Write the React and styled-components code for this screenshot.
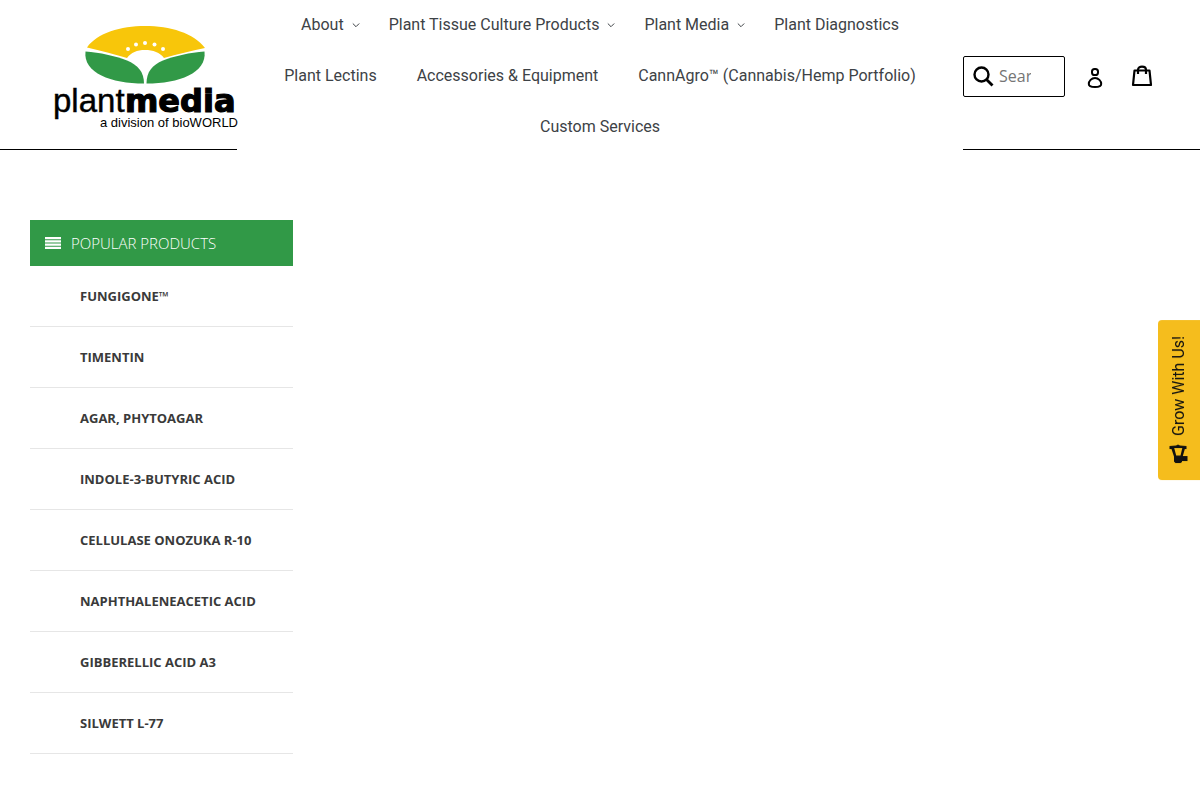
import React from 'react'
import styled, { createGlobalStyle } from 'styled-components'

const GlobalStyle = createGlobalStyle`
    * {
        box-sizing: border-box;
    }
    body {
        margin: 0;
        background-color: #fff;
        color: #3d4246;
        font-family: 'Open Sans', 'Noto Sans', sans-serif;
    }
    a {
        color: inherit;
        text-decoration: none;
    }
`

const Header = styled.header`
    display: grid;
    grid-template-columns: minmax(0, 237fr) minmax(0, 726fr) minmax(0, 237fr);
`

const Side = styled.div`
    display: flex;
    justify-content: flex-end;
    align-items: center;
    padding-top: 3px;
    border-bottom: 1px solid #000;
`

const LogoLink = styled.a`
    display: block;
    > svg {
        display: block;
        overflow: visible;
    }
`

const Nav = styled.nav`
    > ul {
        display: flex;
        flex-wrap: wrap;
        justify-content: center;
        row-gap: 5px;
        margin: 0;
        padding: 2px 0 0;
        list-style: none;
    }
`

const navItem = `
    display: flex;
    align-items: center;
    height: 46px;
    font-family: Roboto, sans-serif;
    font-size: 16px;
    line-height: 24px;
    color: #3d4246;
    white-space: nowrap;
`

const NavLink = styled.a`
    ${navItem}
    padding: 0 20px;
`

const NavButton = styled.button`
    ${navItem}
    gap: 8px;
    padding: 0 9px 0 20px;
    border: 0;
    background: none;
    cursor: pointer;
`

const Tools = styled.div`
    display: flex;
    align-items: center;
    gap: 13px;
    width: 100%;
    padding-right: 41px;
`

const SearchForm = styled.form`
    display: flex;
    align-items: center;
    flex: 1;
    min-width: 0;
    height: 41px;
    border: 1px solid #000;
    border-radius: 2px;
`

const SearchInput = styled.input`
    flex: 1;
    min-width: 0;
    margin-right: 33px;
    padding: 0;
    border: 0;
    outline: 0;
    background: none;
    font-family: 'Open Sans', sans-serif;
    font-size: 16px;
    color: #000;
    &::placeholder {
        color: #757575;
    }
`

const IconButton = styled.button`
    display: flex;
    padding: 0 5px 0 9px;
    border: 0;
    background: none;
    cursor: pointer;
`

const IconLink = styled.a`
    display: flex;
    justify-content: center;
    width: 34px;
`

const Page = styled.main`
    display: grid;
    grid-template-columns: 263px 1fr;
    padding: 70px 30px 46px;
`

const MenuTitle = styled.h2`
    display: flex;
    align-items: center;
    gap: 10px;
    height: 46px;
    margin: 0;
    padding: 0 15px;
    background-color: #319947;
    color: #fff;
    font-size: 15px;
    font-weight: 300;
    line-height: 20px;
    text-transform: uppercase;
`

const MenuList = styled.ul`
    margin: 0;
    padding: 0;
    list-style: none;
`

const MenuItem = styled.li`
    border-bottom: 1px solid #e6e6e6;
    > a {
        display: block;
        padding: 20px 0 20px 50px;
        font-size: 13px;
        font-weight: 700;
        line-height: 20px;
        color: #3a3a3a;
        text-transform: uppercase;
    }
`

const GrowTab = styled.button`
    position: fixed;
    top: 50%;
    right: 0;
    display: flex;
    align-items: center;
    gap: 8px;
    width: 42px;
    padding: 16px 0;
    border: 0;
    border-radius: 0 4px 4px 0;
    background-color: #f5bd1d;
    color: #111;
    font-family: Roboto, sans-serif;
    font-size: 16px;
    line-height: 42px;
    writing-mode: vertical-rl;
    transform: translateY(-50%) rotate(180deg);
    cursor: pointer;
`

const navLinks = [
    { label: 'About', dropdown: true },
    { label: 'Plant Tissue Culture Products', dropdown: true },
    { label: 'Plant Media', dropdown: true },
    { label: 'Plant Diagnostics' },
    { label: 'Plant Lectins' },
    { label: 'Accessories & Equipment' },
    { label: 'CannAgro™ (Cannabis/Hemp Portfolio)' },
    { label: 'Custom Services' },
]

const products = [
    'Fungigone™',
    'Timentin',
    'Agar, Phytoagar',
    'Indole-3-Butyric Acid',
    'Cellulase Onozuka R-10',
    'Naphthaleneacetic Acid',
    'Gibberellic Acid A3',
    'Silwett L-77',
]

function Logo() {
    return (
        <svg width="182" height="102" viewBox="0 0 182 102" role="img" aria-label="plantmedia, a division of bioWORLD">
            <path fill="#f8c60a" d="M32 22.5 C42 8 66 1 90 1 C115 1 139 8 150 23 C136 26 122 29 109 33 C105 27.5 98 25 90 25 C82 25 76 27.5 72 33 C59 29 46 26 32 22.5Z" />
            <path fill="#319947" d="M30.5 26.5 C45 27.5 60 31 72 35.5 C83 40 89 47 89 58.5 C56 58.5 28 48 30.5 26.5Z" />
            <path fill="#319947" d="M149.5 26.5 C135 27.5 120 31 108 35.5 C97 40 91.5 47 91.5 58.5 C124 58.5 152 48 149.5 26.5Z" />
            <g fill="#fff">
                <circle cx="73" cy="24" r="2" />
                <circle cx="81" cy="19.5" r="2" />
                <circle cx="90" cy="18" r="2" />
                <circle cx="99.5" cy="19.5" r="2" />
                <circle cx="108" cy="24" r="2" />
            </g>
            <text x="-2" y="87" fontFamily="Liberation Sans, sans-serif" fontSize="33" stroke="#000" strokeWidth="0.4">plant</text>
            <text x="70" y="87" fontFamily="DejaVu Sans, sans-serif" fontSize="32" fontWeight="700" stroke="#000" strokeWidth="1.2">media</text>
            <text x="183" y="102" fontFamily="Liberation Sans, sans-serif" fontSize="13" textAnchor="end">a division of bioWORLD</text>
        </svg>
    )
}

function Chevron() {
    return (
        <svg width="8" height="6" viewBox="0 0 8 6" fill="none" stroke="#3d4246" aria-hidden="true">
            <path d="M0.8 1.5 L4 4.7 L7.2 1.5" />
        </svg>
    )
}

function Megaphone() {
    return (
        <svg width="20" height="20" viewBox="0 0 20 20" fill="#111" aria-hidden="true">
            <g transform="rotate(180 10 10)">
                <path d="M0.5 2 L7 1.5 L9 0.5 L11 1.5 L17.5 2 V5 H15.8 L13.8 12 H18.5 V17 H13 V18 L11.5 19 H6.5 L5 17.5 V12.500 L2.500 5 H0.5Z M5.200 4 L7.2 11.5 H11.500 L13.3 4Z" fillRule="evenodd" />
            </g>
        </svg>
    )
}

export default function App() {
    return (
        <>
            <GlobalStyle />
            <Header>
                <Side>
                    <LogoLink href="#home">
                        <Logo />
                    </LogoLink>
                </Side>
                <Nav>
                    <ul>
                        {navLinks.map(item => (
                            <li key={item.label}>
                                {item.dropdown
                                    ? <NavButton type="button">{item.label}<Chevron /></NavButton>
                                    : <NavLink href="#nav">{item.label}</NavLink>}
                            </li>
                        ))}
                    </ul>
                </Nav>
                <Side>
                    <Tools>
                        <SearchForm role="search">
                            <IconButton type="submit" aria-label="Submit">
                                <svg width="21" height="21" viewBox="0 0 21 21" fill="none" stroke="#000" strokeWidth="2.4">
                                    <circle cx="8.5" cy="8.5" r="7" />
                                    <path d="M13.5 13.5 L19.5 19.5" strokeWidth="2.8" />
                                </svg>
                            </IconButton>
                            <SearchInput type="text" placeholder="Search" aria-label="Search" />
                        </SearchForm>
                        <IconLink href="#account" aria-label="Log in">
                            <svg width="20" height="24" viewBox="0 0 20 24" fill="none" stroke="#000" strokeWidth="2">
                                <rect x="7" y="5" width="6" height="6" rx="2.6" />
                                <path d="M10 14 C6.5 14 3.8 17 3.8 20 C3.8 22.3 6 23 10 23 C14 23 16.2 22.3 16.2 20 C16.2 17 13.5 14 10 14Z" />
                            </svg>
                        </IconLink>
                        <IconLink href="#cart" aria-label="Cart">
                            <svg width="22" height="22" viewBox="0 0 22 22" fill="none" stroke="#000" strokeWidth="2.2" strokeLinejoin="round">
                                <path d="M3.5 5.5 H18.5 L20 20 H2 Z" />
                                <path d="M7 9 V5 C7 0.5 15 0.5 15 5 V9" />
                            </svg>
                        </IconLink>
                    </Tools>
                </Side>
            </Header>
            <Page>
                <aside>
                    <MenuTitle>
                        <svg width="16" height="12" viewBox="0 0 16 12" fill="#fff" aria-hidden="true">
                            <path d="M0 0H16V2.300H0Z M0 3.2H16V5.5H0Z M0 6.5H16V8.8H0Z M0 9.700H16V12H0Z" />
                        </svg>
                        Popular Products
                    </MenuTitle>
                    <MenuList>
                        {products.map(name => (
                            <MenuItem key={name}>
                                <a href="#product">{name}</a>
                            </MenuItem>
                        ))}
                    </MenuList>
                </aside>
            </Page>
            <GrowTab type="button">
                <Megaphone />
                Grow With Us!
            </GrowTab>
        </>
    )
}
